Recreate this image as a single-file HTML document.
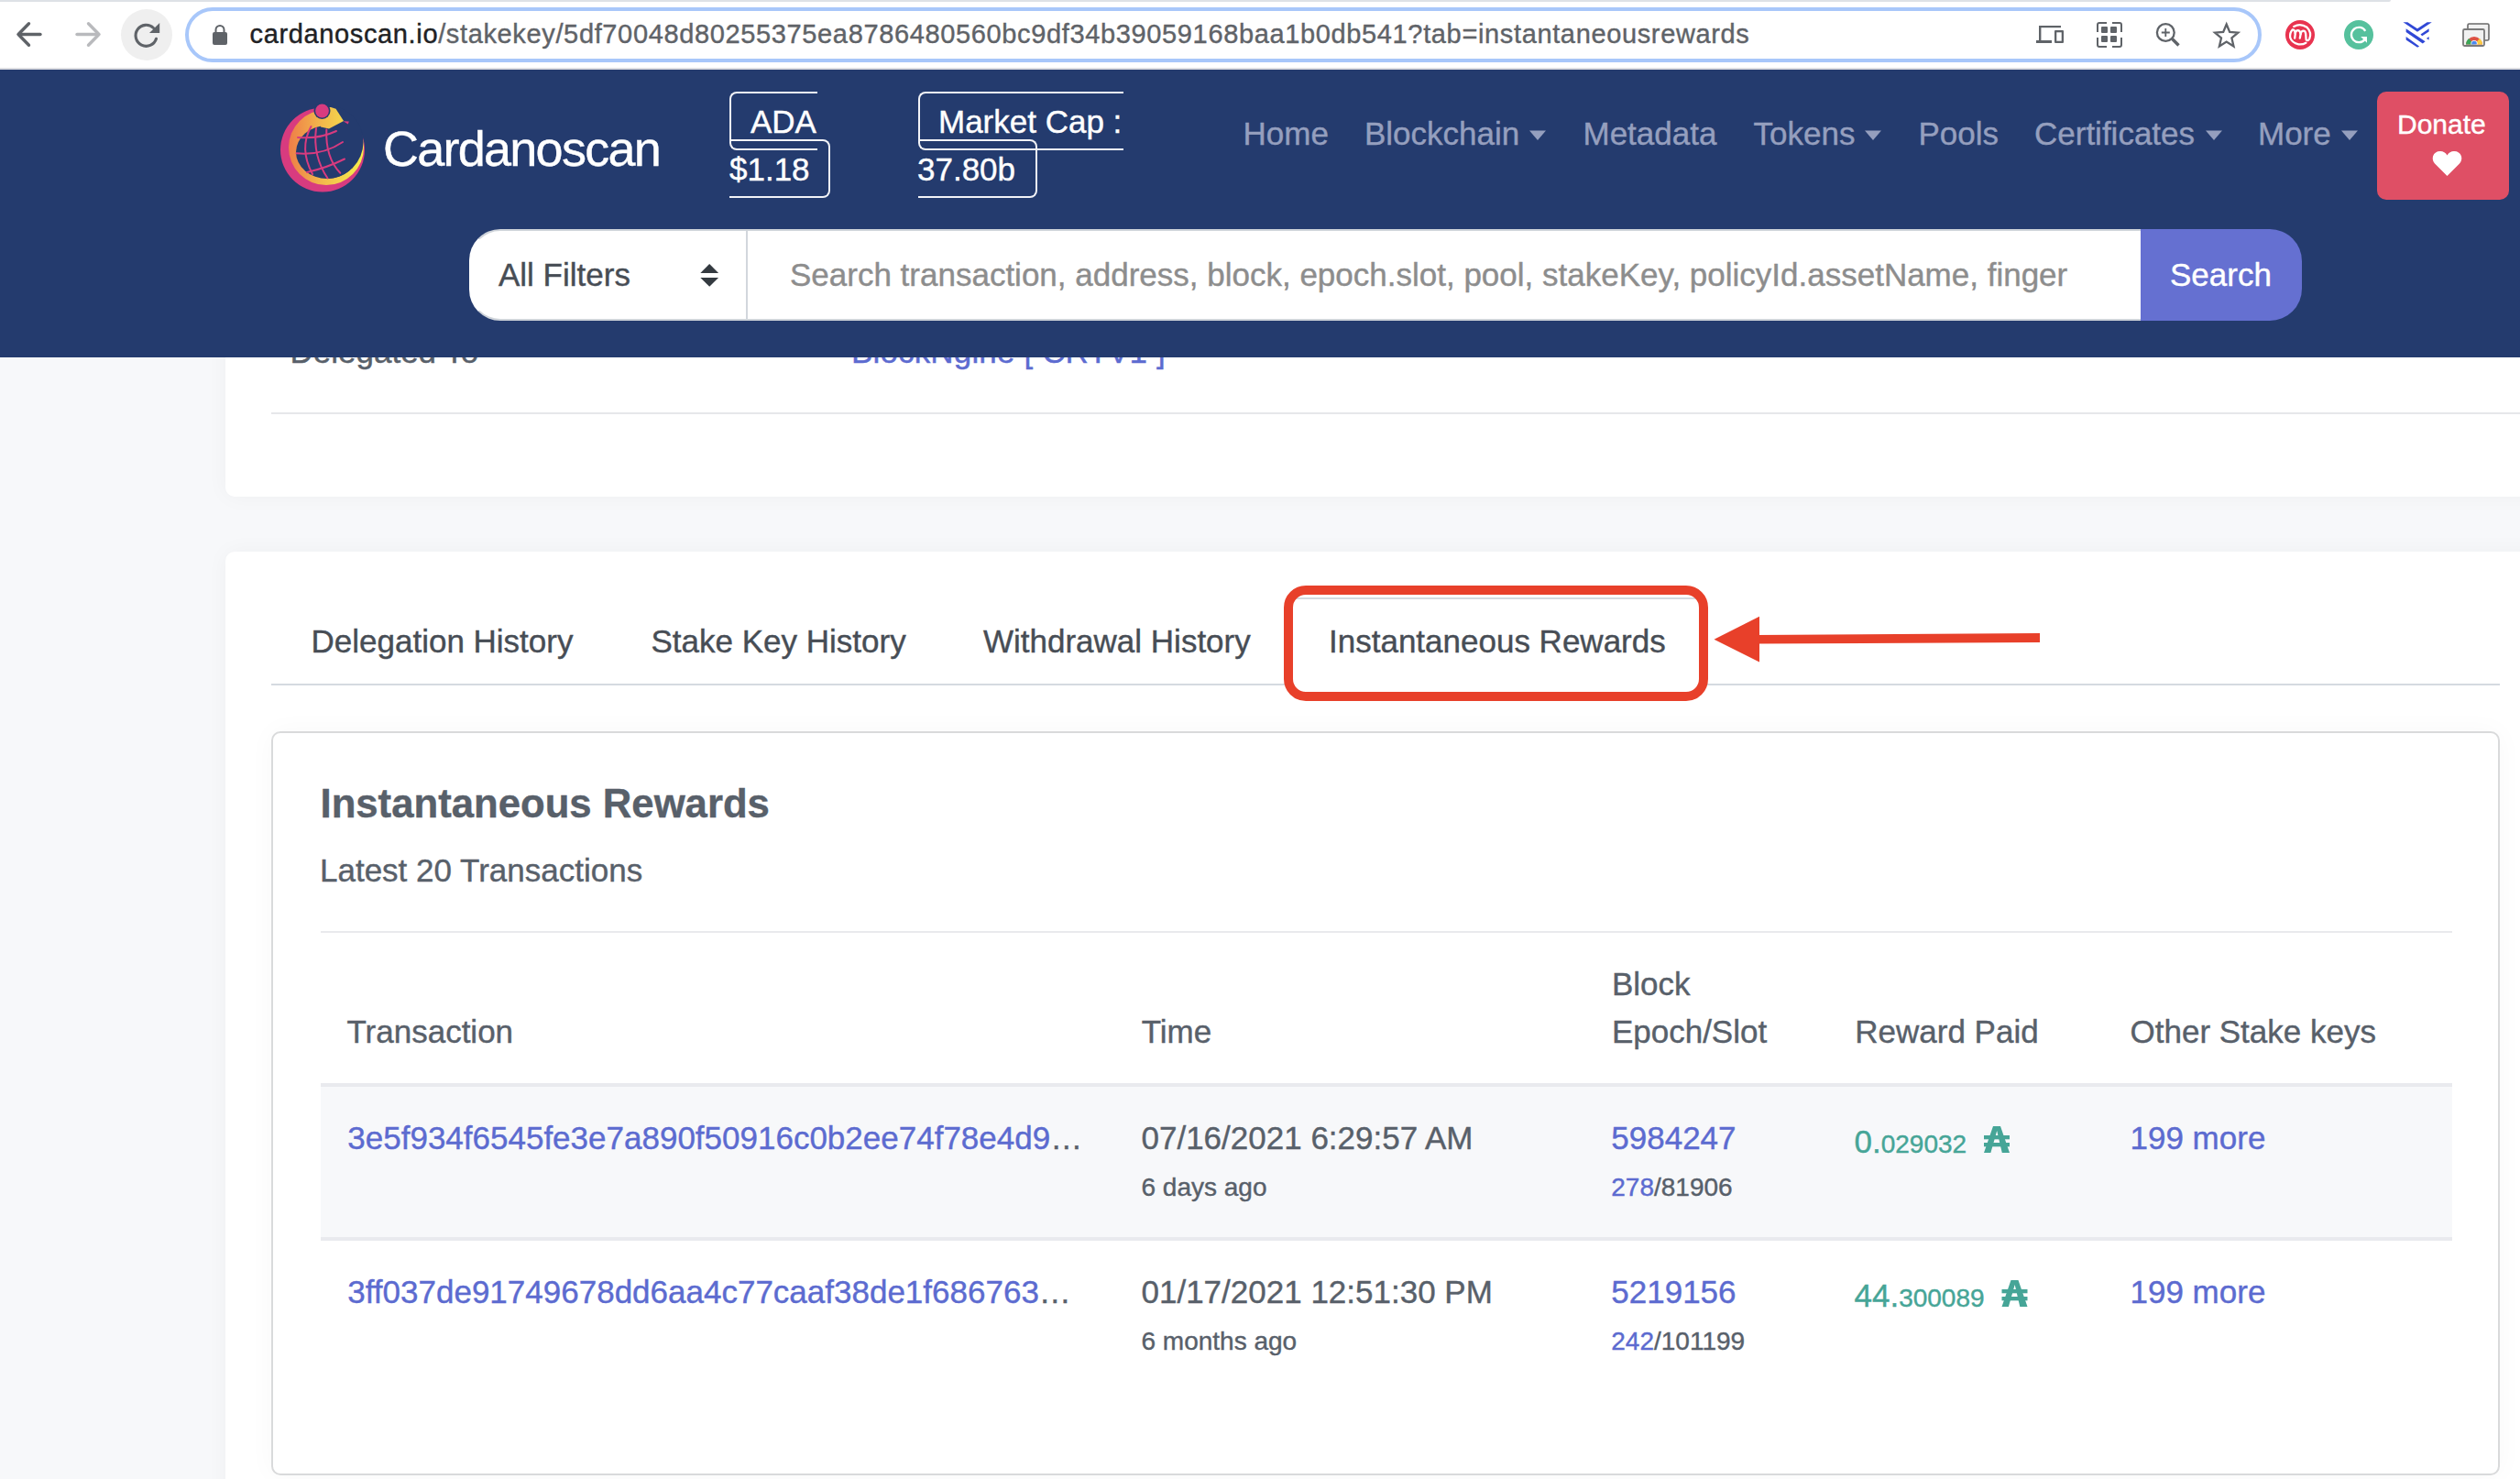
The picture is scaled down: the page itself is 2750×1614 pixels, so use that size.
<!DOCTYPE html>
<html><head><meta charset="utf-8"><style>
html,body{margin:0;padding:0;width:2750px;height:1614px;overflow:hidden;background:#f7f8fa}
body{position:relative;font-family:"Liberation Sans", sans-serif}
.a{position:absolute;display:block}
.t{position:absolute;white-space:pre;font-family:"Liberation Sans", sans-serif;-webkit-text-stroke:0.4px currentColor}
</style></head><body>
<div class="a" style="left:0px;top:0px;width:2750px;height:1614px;background:#f7f8fa"></div>
<div class="a" style="left:246px;top:150px;width:2554px;height:392px;background:#fff;border-radius:10px;box-shadow:0 0 24px rgba(30,40,60,.04)"></div>
<div class="t" style="left:316.50px;top:366.37px;font-size:35px;line-height:35px;color:#58606a;font-weight:400;">Delegated To</div>
<div class="t" style="left:929.00px;top:366.37px;font-size:35px;line-height:35px;color:#5c6bd0;font-weight:400;letter-spacing:0.15px">BlockNgine [ CRTV1 ]</div>
<div class="a" style="left:296px;top:450px;width:2504px;height:2px;background:#e6e7ea"></div>
<div class="a" style="left:246px;top:602px;width:2554px;height:1098px;background:#fff;border-radius:10px;box-shadow:0 0 24px rgba(30,40,60,.04)"></div>
<div class="t" style="left:339.50px;top:682.37px;font-size:35px;line-height:35px;color:#474d55;font-weight:400;">Delegation History</div>
<div class="t" style="left:710.50px;top:682.37px;font-size:35px;line-height:35px;color:#474d55;font-weight:400;">Stake Key History</div>
<div class="t" style="left:1073.00px;top:682.37px;font-size:35px;line-height:35px;color:#474d55;font-weight:400;">Withdrawal History</div>
<div class="a" style="left:296px;top:746px;width:2432px;height:2px;background:#d5dae0"></div>
<div class="a" style="left:1405px;top:652px;width:453px;height:96px;background:#fff;border:2px solid #d5dae0;border-bottom:none;border-radius:8px 8px 0 0;box-sizing:border-box"></div>
<div class="t" style="left:1450.00px;top:682.37px;font-size:35px;line-height:35px;color:#474d55;font-weight:400;">Instantaneous Rewards</div>
<div class="a" style="left:1401px;top:639px;width:463px;height:126px;border:10px solid #e8402a;border-radius:24px;box-sizing:border-box"></div>
<svg class="a" style="left:1860px;top:660px" width="380" height="80" viewBox="1860 660 380 80"><polygon points="1870.5,697.7 1920,672.8 1920,722.5" fill="#e8402a"/><polygon points="1915,692.9 2226,691 2226,701 1915,702.6" fill="#e8402a"/></svg>
<div class="a" style="left:296px;top:798px;width:2432px;height:812px;background:#fff;border:2px solid #d9dadb;border-radius:10px;box-sizing:border-box;box-shadow:0 0 30px rgba(0,0,0,.03)"></div>
<div class="t" style="left:349.50px;top:855.00px;font-size:43.7px;line-height:43.7px;color:#58606a;font-weight:700;">Instantaneous Rewards</div>
<div class="t" style="left:349.00px;top:932.37px;font-size:35px;line-height:35px;color:#58606a;font-weight:400;">Latest 20 Transactions</div>
<div class="a" style="left:350px;top:1016px;width:2326px;height:2px;background:#e9eaed"></div>
<div class="t" style="left:378.50px;top:1108.37px;font-size:35px;line-height:35px;color:#58606a;font-weight:400;">Transaction</div>
<div class="t" style="left:1245.70px;top:1108.37px;font-size:35px;line-height:35px;color:#58606a;font-weight:400;">Time</div>
<div class="t" style="left:1758.90px;top:1056.37px;font-size:35px;line-height:35px;color:#58606a;font-weight:400;">Block</div>
<div class="t" style="left:1758.90px;top:1108.37px;font-size:35px;line-height:35px;color:#58606a;font-weight:400;">Epoch/Slot</div>
<div class="t" style="left:2024.30px;top:1108.37px;font-size:35px;line-height:35px;color:#58606a;font-weight:400;">Reward Paid</div>
<div class="t" style="left:2324.50px;top:1108.37px;font-size:35px;line-height:35px;color:#58606a;font-weight:400;">Other Stake keys</div>
<div class="a" style="left:350px;top:1182px;width:2326px;height:4px;background:#e9eaee"></div>
<div class="a" style="left:350px;top:1186px;width:2326px;height:164px;background:#f7f8fa"></div>
<div class="a" style="left:350px;top:1350px;width:2326px;height:4px;background:#e9eaee"></div>
<div class="t" style="left:379.30px;top:1224.37px;font-size:35px;line-height:35px;color:#5c6bd0;font-weight:400;">3e5f934f6545fe3e7a890f50916c0b2ee74f78e4d9<span style="color:#58606a">…</span></div>
<div class="t" style="left:1245.50px;top:1224.37px;font-size:35px;line-height:35px;color:#58606a;font-weight:400;">07/16/2021 6:29:57 AM</div>
<div class="t" style="left:1245.50px;top:1282.29px;font-size:28px;line-height:28px;color:#58606a;font-weight:400;">6 days ago</div>
<div class="t" style="left:1758.30px;top:1224.37px;font-size:35px;line-height:35px;color:#5c6bd0;font-weight:400;">5984247</div>
<div class="t" style="left:1758.30px;top:1282.29px;font-size:28px;line-height:28px;color:#58606a;font-weight:400;"><span style="color:#5c6bd0">278</span>/81906</div>
<div class="t" style="left:2023.50px;top:1228.37px;font-size:35px;line-height:35px;color:#46a597;font-weight:400;">0.<span style="font-size:28px">029032</span></div>
<svg class="a" style="left:2163px;top:1227px" width="34" height="33" viewBox="2163 1227 34 33"><path fill-rule="evenodd" d="M2165,1258 L2175,1229 L2183,1229 L2193,1258 L2184.8,1258 L2179.2,1234 L2172.4,1258 Z" fill="#46a597"/><rect x="2165" y="1239" width="28" height="4.3" fill="#46a597"/><rect x="2165" y="1247" width="28" height="4.3" fill="#46a597"/></svg>
<div class="t" style="left:2324.50px;top:1224.37px;font-size:35px;line-height:35px;color:#5c6bd0;font-weight:400;">199 more</div>
<div class="t" style="left:379.30px;top:1392.37px;font-size:35px;line-height:35px;color:#5c6bd0;font-weight:400;">3ff037de91749678dd6aa4c77caaf38de1f686763<span style="color:#58606a">…</span></div>
<div class="t" style="left:1245.50px;top:1392.37px;font-size:35px;line-height:35px;color:#58606a;font-weight:400;">01/17/2021 12:51:30 PM</div>
<div class="t" style="left:1245.50px;top:1450.29px;font-size:28px;line-height:28px;color:#58606a;font-weight:400;">6 months ago</div>
<div class="t" style="left:1758.30px;top:1392.37px;font-size:35px;line-height:35px;color:#5c6bd0;font-weight:400;">5219156</div>
<div class="t" style="left:1758.30px;top:1450.29px;font-size:28px;line-height:28px;color:#58606a;font-weight:400;"><span style="color:#5c6bd0">242</span>/101199</div>
<div class="t" style="left:2023.50px;top:1396.37px;font-size:35px;line-height:35px;color:#46a597;font-weight:400;">44.<span style="font-size:28px">300089</span></div>
<svg class="a" style="left:2182px;top:1395px" width="34" height="33" viewBox="2182 1395 34 33"><path fill-rule="evenodd" d="M2184.5,1426 L2194.5,1397 L2202.5,1397 L2212.5,1426 L2204.3,1426 L2198.7,1402 L2191.9,1426 Z" fill="#46a597"/><rect x="2184.5" y="1407" width="28" height="4.3" fill="#46a597"/><rect x="2184.5" y="1415" width="28" height="4.3" fill="#46a597"/></svg>
<div class="t" style="left:2324.50px;top:1392.37px;font-size:35px;line-height:35px;color:#5c6bd0;font-weight:400;">199 more</div>
<div class="a" style="left:0px;top:76px;width:2750px;height:314px;background:#243b6e"></div>
<svg class="a" style="left:300px;top:108px" width="105" height="107" viewBox="300 108 105 107">
<defs><linearGradient id="lg" gradientUnits="userSpaceOnUse" x1="315" x2="396" y1="0" y2="0"><stop offset="0" stop-color="#ee7d48"/><stop offset="0.45" stop-color="#f2b94c"/><stop offset="1" stop-color="#f6ef4b"/></linearGradient>
<clipPath id="lc"><rect x="357" y="100" width="60" height="110"/></clipPath></defs>
<circle cx="352" cy="163.5" r="46" fill="#d83b7f"/>
<circle cx="356" cy="161" r="41" fill="url(#lg)"/>
<ellipse cx="357" cy="166" rx="34" ry="29" fill="#243b6e"/>
<circle cx="356.3" cy="154.9" r="40.2" fill="#243b6e" clip-path="url(#lc)"/>
<g stroke="#d83b7f" stroke-width="2" fill="none" stroke-linecap="round">
<path d="M325 150 Q348 152 367 143"/>
<path d="M323.5 167.3 Q352 170 374 155"/>
<path d="M335 188 Q357 183 376 173.5"/>
<path d="M339.5 138 Q326 162 341 190"/>
<path d="M345 140 Q341 170 357.5 194.5"/>
<path d="M356.3 141.4 Q355 172 371.3 188.8"/>
</g>
<polygon points="345,117 361,117 366.5,118.8 375,132 359,140.6 350,138.5" fill="url(#lg)"/>
<polygon points="374.5,132.3 380.8,132.6 379.8,135.6" fill="#d83b7f"/>
<circle cx="351.5" cy="121" r="9" fill="#243b6e"/>
<circle cx="351.5" cy="121" r="7.4" fill="#d83b7f"/>
</svg>
<div class="t" style="left:418.00px;top:135.28px;font-size:54px;line-height:54px;color:#ffffff;font-weight:400;letter-spacing:-1.75px">Cardanoscan</div>
<div class="a" style="left:796px;top:100px;width:96px;height:64px;border:2px solid #f2f3f7;border-right:none;border-radius:8px 0 0 8px;box-sizing:border-box"></div>
<div class="a" style="left:796px;top:152px;width:110px;height:64px;border:2px solid #f2f3f7;border-left:none;border-radius:0 8px 8px 0;box-sizing:border-box"></div>
<div class="t" style="left:819.00px;top:115.37px;font-size:35px;line-height:35px;color:#ffffff;font-weight:400;">ADA</div>
<div class="t" style="left:796.00px;top:167.37px;font-size:35px;line-height:35px;color:#ffffff;font-weight:400;">$1.18</div>
<div class="a" style="left:1002px;top:100px;width:224px;height:64px;border:2px solid #f2f3f7;border-right:none;border-radius:8px 0 0 8px;box-sizing:border-box"></div>
<div class="a" style="left:1002px;top:152px;width:130px;height:64px;border:2px solid #f2f3f7;border-left:none;border-radius:0 8px 8px 0;box-sizing:border-box"></div>
<div class="t" style="left:1024.00px;top:115.37px;font-size:35px;line-height:35px;color:#ffffff;font-weight:400;">Market Cap :</div>
<div class="t" style="left:1001.00px;top:167.37px;font-size:35px;line-height:35px;color:#ffffff;font-weight:400;">37.80b</div>
<div class="t" style="left:1356.50px;top:128.07px;font-size:35px;line-height:35px;color:#959fbe;font-weight:400;">Home</div>
<div class="t" style="left:1489.00px;top:128.07px;font-size:35px;line-height:35px;color:#959fbe;font-weight:400;">Blockchain</div>
<svg class="a" style="left:1668px;top:141px" width="21" height="14" viewBox="1668 141 21 14"><polygon points="1669,142.6 1687,142.6 1678,153" fill="#959fbe"/></svg>
<div class="t" style="left:1727.50px;top:128.07px;font-size:35px;line-height:35px;color:#959fbe;font-weight:400;">Metadata</div>
<div class="t" style="left:1913.50px;top:128.07px;font-size:35px;line-height:35px;color:#959fbe;font-weight:400;">Tokens</div>
<svg class="a" style="left:2034px;top:141px" width="21" height="14" viewBox="2034 141 21 14"><polygon points="2035,142.6 2053,142.6 2044,153" fill="#959fbe"/></svg>
<div class="t" style="left:2093.50px;top:128.07px;font-size:35px;line-height:35px;color:#959fbe;font-weight:400;">Pools</div>
<div class="t" style="left:2220.00px;top:128.07px;font-size:35px;line-height:35px;color:#959fbe;font-weight:400;">Certificates</div>
<svg class="a" style="left:2405.5px;top:141px" width="21.0" height="14" viewBox="2405.5 141 21.0 14"><polygon points="2406.5,142.6 2424.5,142.6 2415.5,153" fill="#959fbe"/></svg>
<div class="t" style="left:2464.00px;top:128.07px;font-size:35px;line-height:35px;color:#959fbe;font-weight:400;">More</div>
<svg class="a" style="left:2554px;top:141px" width="21" height="14" viewBox="2554 141 21 14"><polygon points="2555,142.6 2573,142.6 2564,153" fill="#959fbe"/></svg>
<div class="a" style="left:2594px;top:100px;width:144px;height:118px;background:#df4f65;border-radius:10px"></div>
<div class="t" style="left:2616.00px;top:120.60px;font-size:30px;line-height:30px;color:#ffffff;font-weight:400;">Donate</div>
<svg class="a" style="left:2650px;top:160px" width="42" height="36" viewBox="2650 160 42 36"><path d="M2670.5 192 L2657 178.5 Q2654 175 2655 170.5 Q2657 165 2663 165 Q2668 165 2670.5 169.5 Q2673 165 2678 165 Q2684 165 2686 170.5 Q2687 175 2684 178.5 Z" fill="#fff"/></svg>
<div class="a" style="left:512px;top:250px;width:1828px;height:100px;background:#fff;border:2px solid #cfd4da;border-left-color:#fff;border-right:none;border-radius:34px 0 0 34px;box-sizing:border-box"></div>
<div class="a" style="left:2336px;top:250px;width:176px;height:100px;background:#6570d1;border-radius:0 35px 35px 0"></div>
<div class="a" style="left:814px;top:252px;width:2px;height:96px;background:#d2d7dd"></div>
<div class="t" style="left:544.00px;top:282.37px;font-size:35px;line-height:35px;color:#474d55;font-weight:400;">All Filters</div>
<svg class="a" style="left:760px;top:284px" width="30" height="32" viewBox="760 284 30 32"><polygon points="764.3,298 774.2,288 784.1,298" fill="#343a40"/><polygon points="764.3,303 784.1,303 774.2,312.7" fill="#343a40"/></svg>
<div class="t" style="left:862.00px;top:282.37px;font-size:35px;line-height:35px;color:#8d8d8d;font-weight:400;">Search transaction, address, block, epoch.slot, pool, stakeKey, policyId.assetName, finger</div>
<div class="t" style="left:2368.00px;top:282.37px;font-size:35px;line-height:35px;color:#ffffff;font-weight:400;">Search</div>
<div class="a" style="left:0px;top:0px;width:2750px;height:76px;background:#fff"></div>
<div class="a" style="left:0px;top:0px;width:2609px;height:2px;background:#dee1e6;border-bottom-right-radius:2px"></div>
<div class="a" style="left:0px;top:74px;width:2750px;height:2px;background:#dcdde1"></div>
<svg class="a" style="left:10px;top:18px" width="50" height="40" viewBox="10 18 50 40"><g stroke="#5f6368" stroke-width="3.4" stroke-linecap="round" stroke-linejoin="round" fill="none"><path d="M44 37.5 H20.5"/><path d="M31.5 25.8 L20 37.5 L31.5 49.2"/></g></svg>
<svg class="a" style="left:75px;top:18px" width="45" height="40" viewBox="75 18 45 40"><g stroke="#b9babd" stroke-width="3.4" stroke-linecap="round" stroke-linejoin="round" fill="none"><path d="M84 37.5 H107.5"/><path d="M96.5 25.8 L108 37.5 L96.5 49.2"/></g></svg>
<svg class="a" style="left:130px;top:9px" width="60" height="58" viewBox="130 9 60 58"><circle cx="160" cy="38" r="28" fill="#efefef"/><path d="M167.5 30.5 A11.5 11.5 0 1 0 170.5 42.3" stroke="#5f6368" stroke-width="3.1" fill="none" stroke-linecap="round"/><polygon points="174.2,25 174.2,35.9 163,35.9" fill="#5f6368"/></svg>
<div class="a" style="left:202px;top:8px;width:2266px;height:60px;border:4px solid #a8c7fa;border-radius:30px;box-sizing:border-box"></div>
<svg class="a" style="left:228px;top:24px" width="24" height="28" viewBox="228 24 24 28"><rect x="232" y="35" width="16" height="14" rx="2" fill="#5f6368"/><path d="M235.5 36 V32.5 A4.5 4.5 0 0 1 244.5 32.5 V36" stroke="#5f6368" stroke-width="2" fill="none"/></svg>
<div class="t" style="left:272.50px;top:23.45px;font-size:29px;line-height:29px;color:#5f6368;font-weight:400;letter-spacing:0.64px"><span style="color:#202124">cardanoscan.io</span>/stakekey/5df70048d80255375ea8786480560bc9df34b39059168baa1b0db541?tab=instantaneousrewards</div>
<svg class="a" style="left:2218px;top:20px" width="40" height="34" viewBox="2218 20 40 34"><g fill="#5f6368"><rect x="2225" y="28" width="24" height="2.2"/><rect x="2225" y="28" width="2.4" height="18"/><rect x="2222" y="44" width="17" height="3"/><rect x="2242" y="33" width="10" height="14" rx="1"/></g><rect x="2244.3" y="35.3" width="5.4" height="9.4" fill="#fff"/></svg>
<svg class="a" style="left:2284px;top:20px" width="36" height="36" viewBox="2284 20 36 36"><g fill="#5f6368"><rect x="2293" y="29" width="7" height="7" rx="1"/><rect x="2303" y="29" width="7" height="7" rx="1"/><rect x="2293" y="39" width="7" height="7" rx="1"/><rect x="2303" y="39" width="7" height="7" rx="1"/></g><g stroke="#5f6368" stroke-width="2" fill="none"><path d="M2289 35 V27 Q2289 25 2291 25 H2299"/><path d="M2305 25 H2313 Q2315 25 2315 27 V35"/><path d="M2289 41 V49 Q2289 51 2291 51 H2299"/><path d="M2305 51 H2313 Q2315 51 2315 49 V41"/></g></svg>
<svg class="a" style="left:2348px;top:20px" width="36" height="36" viewBox="2348 20 36 36"><g stroke="#5f6368" fill="none"><circle cx="2363.3" cy="35.5" r="9.4" stroke-width="2.3"/><path d="M2370.5 42.5 L2377.5 49.5" stroke-width="3.4"/><path d="M2363.3 31 V40 M2358.8 35.5 H2367.8" stroke-width="1.8"/></g></svg>
<svg class="a" style="left:2410px;top:20px" width="40" height="36" viewBox="2410 20 40 36"><polygon points="2429.7,26.5 2433.2,35 2442.3,35.6 2435.4,41.5 2437.5,50.5 2429.7,45.6 2421.9,50.5 2424,41.5 2417.1,35.6 2426.2,35" stroke="#5f6368" stroke-width="2.3" fill="none" stroke-linejoin="miter"/></svg>
<svg class="a" style="left:2490px;top:18px" width="40" height="40" viewBox="2490 18 40 40"><circle cx="2510" cy="38" r="16" fill="#e8334f"/><g stroke="#fff" stroke-width="2.3" fill="none" stroke-linecap="round" stroke-linejoin="round"><path d="M2503.2 28.9 Q2510.5 24.8 2517.5 29.8 Q2523 35.5 2520.2 42.5 Q2518.3 45.5 2516.6 43.2 L2516.2 37 Q2515.8 33.4 2513.3 33.6 Q2511 34 2510.6 37.2 L2509.8 41.6"/><path d="M2510.6 37.2 Q2510 33 2507.3 33.2 Q2505 33.6 2504.8 36.5 L2504.2 41.6"/><path d="M2504.8 36.5 Q2504 31.8 2501.8 32.4 Q2498.6 35.5 2499.2 41 Q2501 46.8 2508.3 48.3 Q2513 48.8 2516.4 46.7"/></g></svg>
<svg class="a" style="left:2554px;top:18px" width="40" height="40" viewBox="2554 18 40 40"><circle cx="2574" cy="38" r="16" fill="#56c19d"/><path d="M2581.2 33.8 A8.2 8.2 0 1 0 2580.5 43.2" stroke="#fff" stroke-width="2.3" fill="none"/><polygon points="2576.2,40 2583,40 2583,46.8" fill="#fff"/></svg>
<svg class="a" style="left:2618px;top:20px" width="42" height="36" viewBox="2618 20 42 36"><g fill="#3048d6"><polygon points="2622.5,24.2 2627.3,24.2 2638,31.3 2648.6,24.2 2653.8,24.2 2638,34.8"/><polygon points="2625.6,31.3 2646.6,45.3 2643.8,47.6 2625.6,35"/><polygon points="2650.6,31.3 2650.6,34.6 2643.2,39.3 2641.5,37.6"/><polygon points="2625.6,40.1 2640.1,50.4 2638.1,51.8 2625.6,43.4"/><polygon points="2650.6,40.1 2650.6,43.6 2647.9,42.1"/></g></svg>
<svg class="a" style="left:2684px;top:22px" width="38" height="32" viewBox="2684 22 38 32"><defs><clipPath id="cw"><rect x="2689" y="33" width="21" height="15.5"/></clipPath></defs><rect x="2693" y="26" width="23" height="18" rx="1.5" fill="#f1f1f1" stroke="#6a6a6a" stroke-width="1.6"/><rect x="2688" y="32" width="23" height="18" rx="1.5" fill="#f1f1f1" stroke="#7a7a7a" stroke-width="1.8"/><g clip-path="url(#cw)"><circle cx="2700" cy="49" r="9" fill="#dd5144"/><path d="M2700 49 L2691 49 A9 9 0 0 1 2694.2 42.1 Z" fill="#3aa757"/><path d="M2700 49 L2709 49 A9 9 0 0 0 2705.8 42.1 Z" fill="#fbcd3f"/><circle cx="2700" cy="47.5" r="3.6" fill="#fff"/><circle cx="2700" cy="47.5" r="2.8" fill="#4a88f0"/></g></svg>
</body></html>
